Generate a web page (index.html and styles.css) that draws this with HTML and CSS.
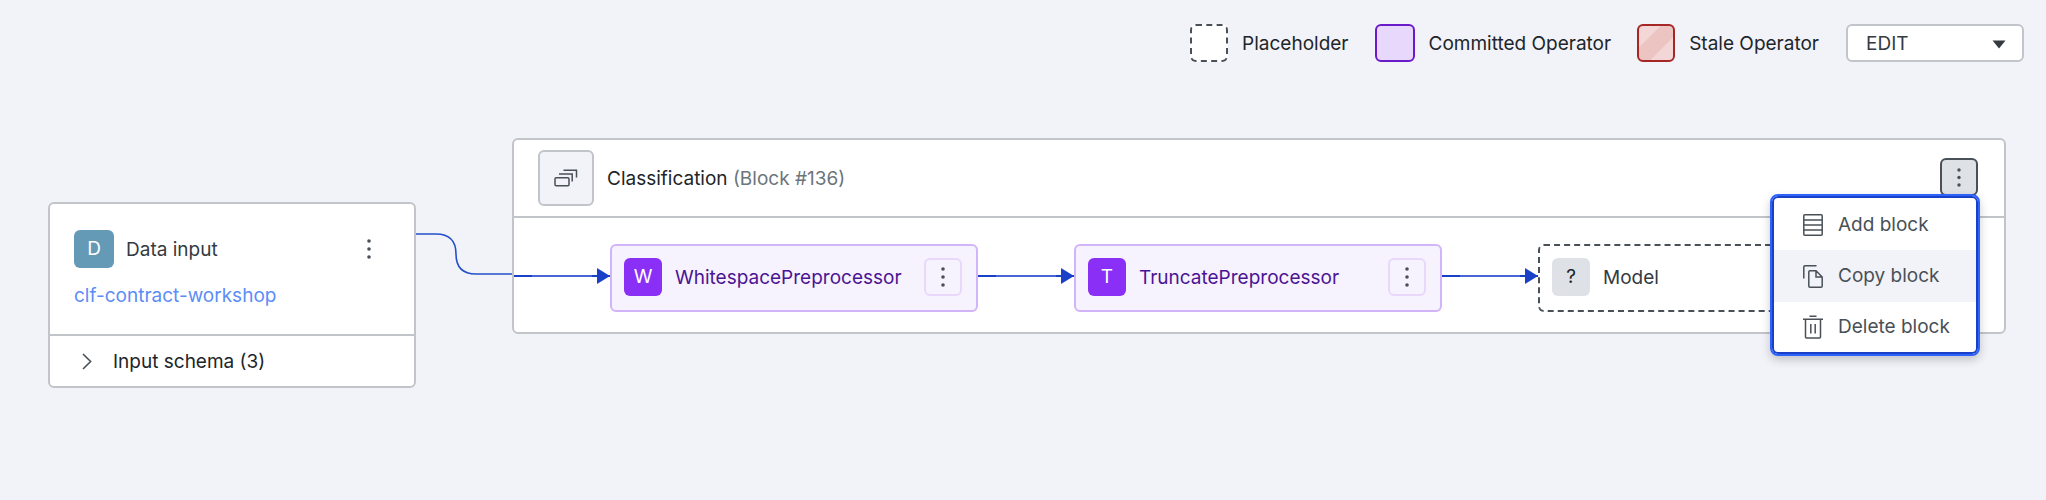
FILE: index.html
```html
<!DOCTYPE html>
<html lang="en">
<head>
<meta charset="utf-8">
<title>Pipeline editor</title>
<link rel="stylesheet" href="styles.css">
</head>
<body>
<header class="toolbar">
  <ul class="legend">
    <li class="legend-item"><span class="swatch swatch-placeholder"></span><span class="label">Placeholder</span></li>
    <li class="legend-item"><span class="swatch swatch-committed"></span><span class="label">Committed Operator</span></li>
    <li class="legend-item"><span class="swatch swatch-stale"></span><span class="label">Stale Operator</span></li>
  </ul>
  <div class="mode">
    <select class="mode-select" aria-label="Mode"><option>EDIT</option></select>
    <svg class="mode-caret" width="14" height="9" viewBox="0 0 14 9" aria-hidden="true"><path d="M0.5 0.5h13L7 8.5z" fill="#343a40"/></svg>
  </div>
</header>
<main class="pipeline">
  <section class="input-card">
    <div class="input-main">
      <div class="input-head">
        <span class="badge badge-input">D</span>
        <span class="input-title label">Data input</span>
        <button class="kebab" aria-label="Data input options"><svg width="4" height="20" viewBox="0 0 4 20"><circle cx="2" cy="2" r="1.8"/><circle cx="2" cy="10" r="1.8"/><circle cx="2" cy="18" r="1.8"/></svg></button>
      </div>
      <a class="dataset" href="#">clf-contract-workshop</a>
    </div>
    <button class="schema">
      <svg width="10" height="17" viewBox="0 0 10 17" fill="none" stroke="#495057" stroke-width="1.6"><path d="M1 1l7.6 7.5L1 16"/></svg>
      <span class="label">Input schema (3)</span>
    </button>
  </section>
  <svg class="connector" width="96" height="44" viewBox="0 0 96 44" fill="none" stroke="#2450cc" stroke-width="1.6"><path d="M0 2h20q20 0 20 20q0 20 20 20h36"/></svg>
  <section class="block">
    <div class="block-head">
      <span class="block-icon"><svg width="24" height="18" viewBox="0 0 24 18" fill="none" stroke="#495057" stroke-width="1.5"><rect x="1" y="8.8" width="14" height="8" rx="1.2"/><path d="M5 5h13.2v7.6M9.5 1.2h13v7.4"/></svg></span>
      <h2 class="block-title label">Classification <span class="block-id">(Block #136)</span></h2>
      <div class="block-actions">
        <button class="kebab kebab-active" aria-label="Block options" aria-expanded="true"><svg width="4" height="20" viewBox="0 0 4 20"><circle cx="2" cy="3" r="1.7"/><circle cx="2" cy="10.5" r="1.7"/><circle cx="2" cy="18" r="1.7"/></svg></button>
        <div class="menu">
          <button class="menu-item"><svg width="20" height="22" viewBox="0 0 20 22" fill="none" stroke="#495057" stroke-width="1.5"><rect x="0.8" y="0.8" width="18.4" height="20.4" rx="1"/><path d="M1 6h18M1 11h18M1 16h18"/></svg>Add block</button>
          <button class="menu-item menu-item-hover"><svg width="20" height="23" viewBox="0 0 20 23" fill="none" stroke="#495057" stroke-width="1.5"><path d="M13.5 0.8H2Q0.8 0.8 0.8 2V13.5"/><path d="M13 5.8H7Q5.8 5.8 5.8 7V21Q5.8 22.2 7 22.2H18Q19.2 22.2 19.2 21V12zV12H19.2"/></svg>Copy block</button>
          <button class="menu-item"><svg width="20" height="24" viewBox="0 0 20 24" fill="none" stroke="#495057" stroke-width="1.5"><path d="M6.5 1.2h7M0 4.3h20M2.5 4.5V22Q2.5 23 3.5 23H16.5Q17.5 23 17.5 22V4.5M7.8 9v9.5M12.2 9v9.5"/></svg>Delete block</button>
        </div>
      </div>
    </div>
    <div class="block-body">
      <svg class="arrow" width="96" height="16" viewBox="0 0 96 16" fill="#1a40c8"><path d="M18 7h60v2H18z" opacity=".8"/><path d="M0 7h18v2H0zM78 7h18v2H78zM83 0l13 8l-13 8z"/></svg>
      <div class="operator">
        <span class="badge badge-operator">W</span><span class="operator-name label">WhitespacePreprocessor</span>
        <button class="kebab kebab-operator" aria-label="WhitespacePreprocessor options"><svg width="4" height="20" viewBox="0 0 4 20"><circle cx="2" cy="2" r="1.8"/><circle cx="2" cy="10" r="1.8"/><circle cx="2" cy="18" r="1.8"/></svg></button>
      </div>
      <svg class="arrow" width="96" height="16" viewBox="0 0 96 16" fill="#1a40c8"><path d="M18 7h60v2H18z" opacity=".8"/><path d="M0 7h18v2H0zM78 7h18v2H78zM83 0l13 8l-13 8z"/></svg>
      <div class="operator">
        <span class="badge badge-operator">T</span><span class="operator-name label">TruncatePreprocessor</span>
        <button class="kebab kebab-operator" aria-label="TruncatePreprocessor options"><svg width="4" height="20" viewBox="0 0 4 20"><circle cx="2" cy="2" r="1.8"/><circle cx="2" cy="10" r="1.8"/><circle cx="2" cy="18" r="1.8"/></svg></button>
      </div>
      <svg class="arrow" width="96" height="16" viewBox="0 0 96 16" fill="#1a40c8"><path d="M18 7h60v2H18z" opacity=".8"/><path d="M0 7h18v2H0zM78 7h18v2H78zM83 0l13 8l-13 8z"/></svg>
      <div class="operator operator-placeholder">
        <span class="badge badge-unknown">?</span><span class="operator-name label">Model</span>
      </div>
    </div>
  </section>
</main>
</body>
</html>
```
FILE: styles.css
```css
* { box-sizing: border-box; }
body {
  margin: 0;
  min-height: 100vh;
  background: #f2f3f8;
  color: #212529;
  font: 19px/28px Inter, "Liberation Sans", sans-serif;
}
button, select { font: inherit; color: inherit; }
button { border: 0; padding: 0; background: none; cursor: pointer; }
svg { display: block; flex: none; }
.label { padding-top: 2px; }

.toolbar {
  display: flex;
  justify-content: flex-end;
  align-items: center;
  gap: 27px;
  padding: 24px 22px 0;
}
.legend { display: flex; gap: 26px; margin: 0; padding: 0; list-style: none; }
.legend-item { display: flex; align-items: center; gap: 14px; }
.swatch { width: 38px; height: 38px; border: 2px solid; border-radius: 6px; }
.swatch-placeholder { border: 2px dashed #495057; background: #fff; }
.swatch-committed { width: 40px; border-color: #6a1bc9; background: #e8d9fc; }
.swatch-stale {
  border-color: #a62626;
  background: linear-gradient(135deg, #f3d7d7 0 32%, #ecc4c2 32% 67%, #f3d7d7 67%);
}
.mode { position: relative; width: 178px; }
.mode-select {
  display: block;
  width: 100%;
  height: 38px;
  padding: 2px 18px 0;
  border: 2px solid #c1c5ca;
  border-radius: 6px;
  background: #fff;
  color: #343a40;
  appearance: none;
}
.mode-caret { position: absolute; right: 18px; top: 16px; pointer-events: none; }

.pipeline { display: flex; align-items: flex-start; padding: 76px 40px 0 48px; }
.input-card {
  flex: none;
  width: 368px;
  margin-top: 64px;
  border: 2px solid #c1c5ca;
  border-radius: 6px;
  background: #fff;
}
.input-main { padding: 26px 26px 24px 24px; }
.input-head { display: flex; align-items: center; gap: 12px; }
.input-title { flex: 1; color: #343a40; }
.dataset { display: block; margin-top: 14px; color: #5c8df6; text-decoration: none; }
.schema {
  display: flex;
  align-items: center;
  gap: 21px;
  width: 100%;
  padding: 10px 32px;
  border-top: 2px solid #c1c5ca;
}
.badge {
  display: grid;
  place-items: center;
  flex: none;
  width: 38px;
  height: 38px;
  border-radius: 6px;
  color: #fff;
}
.badge-input { width: 40px; background: #659ab7; }
.badge-operator { background: #8a2ff5; }
.badge-unknown { background: #dee1e6; color: #212529; }
.kebab {
  display: grid;
  place-items: center;
  flex: none;
  width: 38px;
  height: 38px;
  border: 2px solid transparent;
  border-radius: 6px;
  fill: #495057;
}
.kebab-operator { border-color: #e8d9fc; }
.kebab-active { border-color: #495057; background: #dee1e6; }

.connector { margin-top: 94px; }
.block {
  flex: 1;
  min-width: 0;
  border: 2px solid #c1c5ca;
  border-radius: 6px;
  background: #fff;
}
.block-head {
  display: flex;
  align-items: center;
  gap: 13px;
  padding: 10px 26px 10px 24px;
  border-bottom: 2px solid #c1c5ca;
}
.block-icon {
  display: grid;
  place-items: center;
  width: 56px;
  height: 56px;
  border: 2px solid #c1c5ca;
  border-radius: 6px;
  background: #f2f3f8;
}
.block-title { flex: 1; margin: 0; font-size: 19px; font-weight: 400; }
.block-id { color: #6c757d; }
.block-actions { position: relative; margin-bottom: 2px; }
.block-body { display: flex; align-items: center; padding: 26px 0 20px; }
.arrow { margin-bottom: 4px; }
.operator {
  display: flex;
  align-items: center;
  flex: none;
  gap: 13px;
  width: 368px;
  padding: 12px 14px 14px 12px;
  border: 2px solid #d2b4f8;
  border-radius: 6px;
  background: #f6f2fe;
  color: #4b1494;
}
.operator-name { flex: 1; }
.operator-placeholder { border: 2px dashed #495057; background: #fff; color: #343a40; }

.menu {
  position: absolute;
  z-index: 1;
  top: 36px;
  right: -2px;
  width: 210px;
  border: 2px solid #2d62fb;
  border-radius: 8px;
  background: #fff;
  box-shadow: inset 0 0 0 2px #1a40c8, 0 4px 10px rgba(0, 0, 0, 0.2);
  padding: 4px 2px 2px;
}
.menu-item {
  display: flex;
  align-items: center;
  gap: 15px;
  width: 100%;
  height: 52px;
  padding: 0 29px;
  color: #495057;
  white-space: nowrap;
}
.menu-item:first-child, .menu-item:last-child { height: 50px; }
.menu-item-hover { background: #f2f3f8; }
```
